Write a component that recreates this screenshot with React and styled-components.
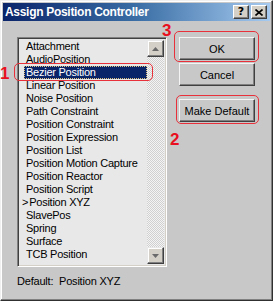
import React from "react";
import styled, {createGlobalStyle} from 'styled-components';

const GlobalStyle = createGlobalStyle`
  html, body {
    margin: 0;
    padding: 0;
    background: #c8c8c8;
  }
  body {
    font-family: "Liberation Sans", Arial, sans-serif;
  }
`;

const items = [
  'Attachment',
  'AudioPosition',
  'Bezier Position',
  'Linear Position',
  'Noise Position',
  'Path Constraint',
  'Position Constraint',
  'Position Expression',
  'Position List',
  'Position Motion Capture',
  'Position Reactor',
  'Position Script',
  'Position XYZ',
  'SlavePos',
  'Spring',
  'Surface',
  'TCB Position',
];

const selected = 'Bezier Position';
const current = 'Position XYZ';

const Arrow = ({down}) => (
  <svg width="7" height="4" viewBox="0 0 7 4">
    {down
      ? <path d="M0 0h7L3.5 4z" fill="#6a6a6a"/>
      : <path d="M0 4h7L3.5 0z" fill="#6a6a6a"/>}
  </svg>
);

export default function App() {
  return (
    <>
      <GlobalStyle/>
      <Window>
        <TitleBar>
          <Title>Assign Position Controller</Title>
          <TitleButtons>
            <TitleButton>?</TitleButton>
            <TitleButton>
              <svg width="8" height="7" viewBox="0 0 8 7">
                <path d="M0.5 0.5L7.5 6.5M7.5 0.5L0.5 6.5" stroke="#000" strokeWidth="1.6"/>
              </svg>
            </TitleButton>
          </TitleButtons>
        </TitleBar>

        <Body>
          <LeftColumn>
            <ListBox>
              <Items>
                {items.map(name => (
                  <Item key={name} $selected={name === selected}>
                    {name === selected && <Mark $pos="left">1</Mark>}
                    {name === selected && <Outline $inset="-3px -6px -2px -10px"/>}
                    {name === current && <Pointer>&gt;</Pointer>}
                    {name}
                  </Item>
                ))}
              </Items>
              <ScrollBar>
                <ScrollButton><Arrow/></ScrollButton>
                <Track/>
                <ScrollButton><Arrow down/></ScrollButton>
              </ScrollBar>
            </ListBox>
            <DefaultLabel>Default:&nbsp; Position XYZ</DefaultLabel>
          </LeftColumn>

          <RightColumn>
            <Marked>
              <Mark $pos="top">3</Mark>
              <Outline $inset="-6px -4px -2px -5px"/>
              <Button>OK</Button>
            </Marked>
            <Button>Cancel</Button>
            <Marked $gap>
              <Outline $inset="-4px -4px -2px -3px"/>
              <Button>Make Default</Button>
              <Mark $pos="below">2</Mark>
            </Marked>
          </RightColumn>
        </Body>
      </Window>
    </>
  );
}

const Window = styled.div`
  width: 273px;
  height: 301px;
  box-sizing: border-box;
  padding: 2px;
  background: #c8c8c8;
  border: 1px solid;
  border-color: #f0f0f0 #303030 #303030 #f0f0f0;
  box-shadow: inset -1px -1px #808080, inset 1px 1px #ffffff;

  display: flex;
  flex-direction: column;
`;

const TitleBar = styled.div`
  height: 18px;
  flex: 0 0 auto;
  padding: 0 3px 0 2px;
  background: linear-gradient(to right, #0a246a 0%, #3a6ea5 50%, #a6caf0 100%);

  display: flex;
  align-items: center;
  justify-content: space-between;
`;

const Title = styled.span`
  color: #ffffff;
  font-family: "Liberation Sans", Arial, sans-serif;
  font-weight: bold;
  font-size: 12px;
  letter-spacing: -0.3px;
`;

const TitleButtons = styled.div`
  display: flex;
  gap: 2px;
`;

const TitleButton = styled.div`
  width: 16px;
  height: 14px;
  box-sizing: border-box;
  background: #d4d0c8;
  border: 1px solid;
  border-color: #ffffff #404040 #404040 #ffffff;
  box-shadow: inset -1px -1px #808080;
  font-family: "DejaVu Sans", sans-serif;
  font-weight: bold;
  font-size: 11px;
  line-height: 12px;
  color: #000;

  display: flex;
  align-items: center;
  justify-content: center;
`;

const Body = styled.div`
  flex: 1 1 auto;
  padding: 16px 0 0 14px;

  display: flex;
  gap: 12px;
`;

const LeftColumn = styled.div`
  display: flex;
  flex-direction: column;
`;

const ListBox = styled.div`
  width: 150px;
  height: 230px;
  box-sizing: border-box;
  background: #e8e8e8;
  border: 1px solid;
  border-color: #808080 #ffffff #ffffff #808080;
  box-shadow: inset 1px 1px #404040, inset -1px -1px #d4d0c8;
  padding: 2px;

  display: flex;
`;

const Items = styled.div`
  flex: 1 1 auto;
  padding-left: 4px;
  font-size: 11px;
  letter-spacing: -0.25px;
  color: #000;
`;

const Item = styled.div`
  position: relative;
  height: 13px;
  line-height: 13px;
  padding-left: 2px;
  white-space: nowrap;
  color: ${p => p.$selected ? '#ffffff' : '#000000'};
  background: ${p => p.$selected ? '#0a246a' : 'transparent'};
  outline: ${p => p.$selected ? '1px dotted #e0c080' : 'none'};
  outline-offset: -1px;
`;

const Pointer = styled.span`
  margin-left: -4px;
  margin-right: 1px;
`;

const ScrollBar = styled.div`
  width: 17px;
  flex: 0 0 auto;

  display: flex;
  flex-direction: column;
`;

const ScrollButton = styled.div`
  height: 17px;
  box-sizing: border-box;
  background: #d4d0c8;
  border: 1px solid;
  border-color: #e8e8e8 #404040 #404040 #e8e8e8;
  box-shadow: inset -1px -1px #808080, inset 1px 1px #ffffff;

  display: flex;
  align-items: center;
  justify-content: center;
`;

const Track = styled.div`
  flex: 1 1 auto;
  background: repeating-conic-gradient(#f4f4f4 0 25%, #d0d0d0 0 50%) 0 0 / 2px 2px;
`;

const DefaultLabel = styled.div`
  margin-top: 8px;
  font-size: 11px;
  line-height: 13px;
  letter-spacing: -0.2px;
  color: #000;
`;

const RightColumn = styled.div`
  display: flex;
  flex-direction: column;
  gap: 3px;
`;

const Marked = styled.div`
  position: relative;
  margin-top: ${p => p.$gap ? '10px' : '0'};
`;

const Button = styled.div`
  width: 76px;
  height: 23px;
  box-sizing: border-box;
  background: #c8c8c8;
  border: 1px solid;
  border-color: #f4f4f4 #404040 #404040 #f4f4f4;
  box-shadow: inset -1px -1px #808080;
  font-size: 11px;
  color: #000;

  display: flex;
  align-items: center;
  justify-content: center;
`;

const Outline = styled.div`
  position: absolute;
  z-index: 2;
  inset: ${p => p.$inset};
  border: 1.5px solid #e8303a;
  border-radius: 5px;
  pointer-events: none;
`;

const Mark = styled.span`
  position: absolute;
  z-index: 2;
  color: #e81020;
  font-family: "Liberation Sans", Arial, sans-serif;
  font-weight: bold;
  font-size: 17px;
  line-height: 17px;
  letter-spacing: 0;
  ${p => p.$pos === 'left' && 'left: -24px; top: -1px;'}
  ${p => p.$pos === 'top' && 'left: -17px; top: -15px;'}
  ${p => p.$pos === 'below' && 'left: -9px; top: 32px;'}
`;
